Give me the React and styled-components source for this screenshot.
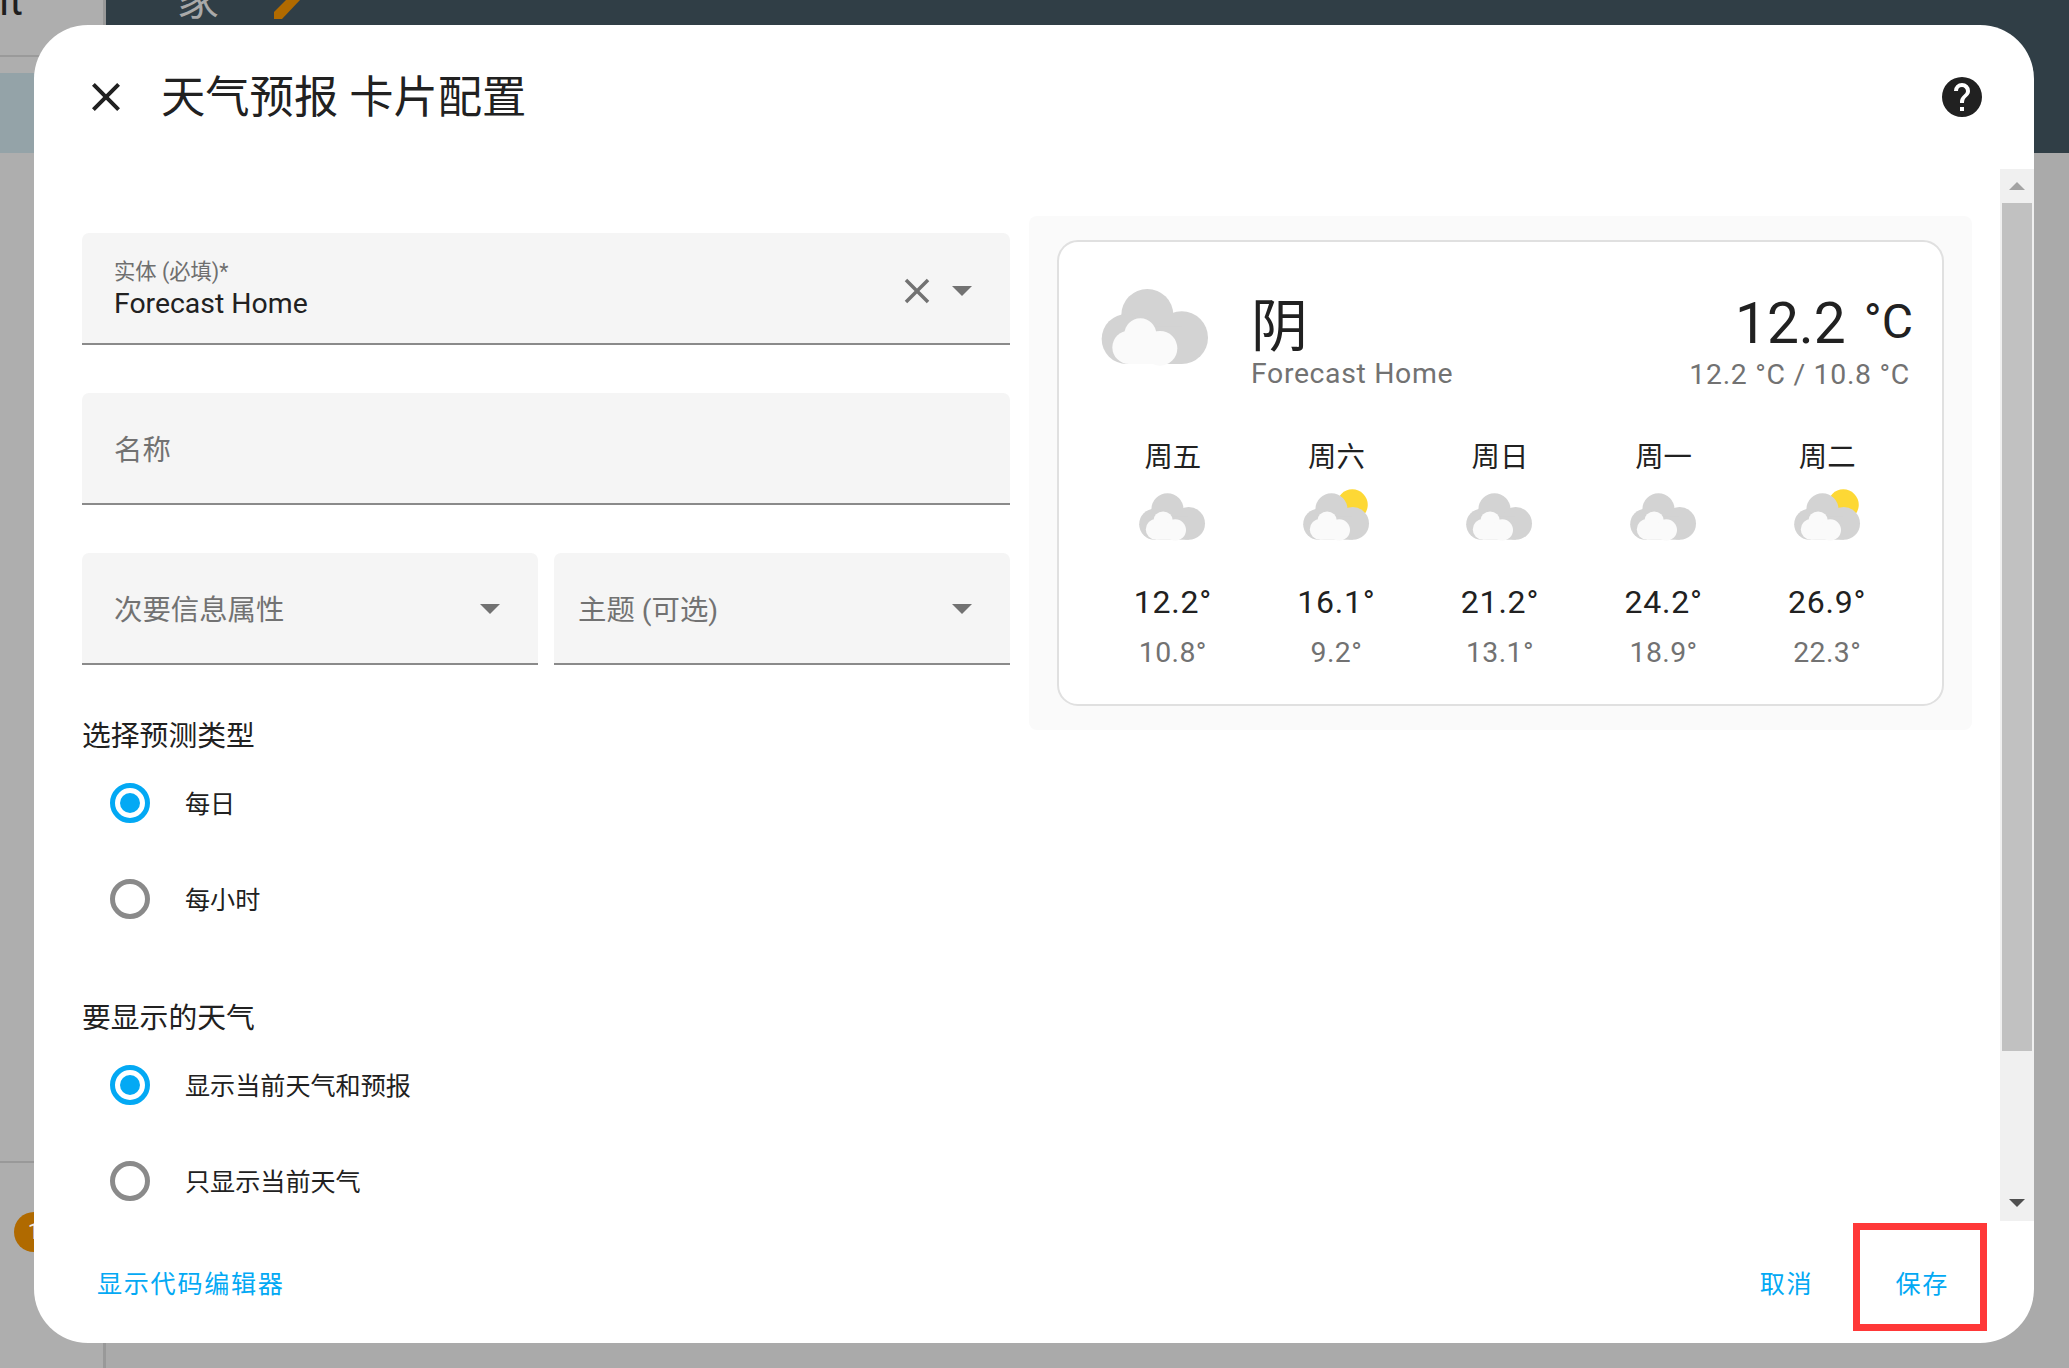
import React from "react";
import styled, { createGlobalStyle } from "styled-components";

const Global = createGlobalStyle`
  html, body { margin: 0; padding: 0; width: 2069px; height: 1368px; overflow: hidden; background: #aaaaaa; }
  * { box-sizing: border-box; }
  body { font-family: Roboto, "Noto Sans CJK SC", "Noto Sans", sans-serif; color: #212121; }
`;

const Page = styled.div`
  position: relative;
  width: 2069px;
  height: 1368px;
  display: flex;
  overflow: hidden;
  background: #aaaaaa;
`;
const Sidebar = styled.aside`
  width: 106px;
  flex: none;
  display: flex;
  flex-direction: column;
  border-right: 3px solid #999999;
  background: #aeaeae;
`;
const SideTitle = styled.div`
  height: 57px;
  flex: none;
  border-bottom: 2px solid #9a9a9a;
  overflow: hidden;
  font-size: 42px;
  line-height: 42px;
  color: #1f1f1f;
  white-space: nowrap;
  & > span { display: block; margin-top: -20px; margin-left: -1px; }
`;
const SideActive = styled.div`
  height: 80px;
  margin-top: 16px;
  flex: none;
  background: #94a3a8;
`;
const SideSpacer = styled.div`
  height: 1010px;
  flex: none;
  border-bottom: 2px solid #999999;
`;
const Badge = styled.div`
  width: 40px;
  height: 40px;
  margin: 49px 0 0 14px;
  border-radius: 50%;
  background: #b06a00;
  color: #eeeeee;
  font-size: 22px;
  line-height: 40px;
  text-align: center;
`;
const Main = styled.main`
  flex: 1;
  display: flex;
  flex-direction: column;
`;
const TopBar = styled.header`
  height: 153px;
  flex: none;
  background: #303e46;
  display: flex;
  align-items: flex-start;
  padding-left: 71px;
  gap: 55px;
  overflow: hidden;
`;
const TopWord = styled.span`
  font-size: 42px;
  line-height: 42px;
  margin-top: -20px;
  color: #a9a9a9;
`;
const Dialog = styled.section`
  position: absolute;
  left: 34px;
  top: 25px;
  width: 2000px;
  height: 1318px;
  border-radius: 54px;
  background: #ffffff;
  display: flex;
  flex-direction: column;
  overflow: hidden;
`;
const DialogHeader = styled.div`
  height: 144px;
  flex: none;
  display: flex;
  align-items: flex-start;
  padding: 48px 48px 0 48px;
`;
const HeaderIcon = styled.svg`
  width: 48px;
  height: 48px;
  flex: none;
  fill: #212121;
`;
const Title = styled.h1`
  flex: 1;
  margin: 1px 0 0 31px;
  font-size: 44.3px;
  line-height: 48px;
  font-weight: 400;
  color: #212121;
`;
const Body = styled.div`
  height: 1052px;
  flex: none;
  display: flex;
  overflow: hidden;
`;
const Content = styled.div`
  flex: 1;
  display: flex;
  align-items: flex-start;
  padding: 47px 28px 0 48px;
  gap: 19px;
`;
const FormColumn = styled.div`
  width: 928px;
  flex: none;
  padding-top: 17px;
  display: flex;
  flex-direction: column;
`;
const Field = styled.div`
  position: relative;
  height: 112px;
  flex: none;
  min-width: 0;
  margin-bottom: ${p => (p.$half ? "0" : "48px")};
  padding-left: ${p => p.$inset || 32}px;
  padding-right: 24px;
  background: #f5f5f5;
  border-bottom: 2px solid #8a8a8a;
  border-radius: 7px 7px 0 0;
  display: flex;
  align-items: center;
`;
const FieldStack = styled.div`
  flex: 1;
  padding-top: 3px;
  display: flex;
  flex-direction: column;
`;
const SmallLabel = styled.span`
  font-size: 21.3px;
  line-height: 28px;
  color: #6f6f6f;
`;
const FieldValue = styled.span`
  font-size: 28.4px;
  line-height: 36px;
  color: #212121;
`;
const Placeholder = styled.span`
  flex: 1;
  padding-top: 6px;
  font-size: 28.4px;
  line-height: 40px;
  color: #727272;
`;
const FieldIcon = styled.svg`
  width: ${p => p.$size}px;
  height: ${p => p.$size}px;
  flex: none;
  fill: #727272;
  margin-top: ${p => p.$drop || 0}px;
`;
const FieldRow = styled.div`
  display: grid;
  grid-template-columns: 1fr 1fr;
  gap: 16px;
`;
const Group = styled.div`
  margin-top: 48px;
`;
const GroupTitle = styled.div`
  height: 42px;
  padding-top: 2px;
  font-size: 28.8px;
  line-height: 42px;
  color: #212121;
`;
const RadioRow = styled.label`
  height: 96px;
  padding-left: 28px;
  display: flex;
  align-items: center;
  gap: 35px;
  font-size: 25.1px;
  line-height: 34px;
  color: #212121;
`;
const RadioText = styled.span`
  margin-top: 3px;
`;
const RadioMark = styled.span`
  width: 40px;
  height: 40px;
  flex: none;
  border-radius: 50%;
  border: 5px solid ${p => (p.$on ? "#03a9f4" : "#8a8a8a")};
  display: flex;
  align-items: center;
  justify-content: center;
  &::after {
    content: "";
    width: 20px;
    height: 20px;
    border-radius: 50%;
    background: ${p => (p.$on ? "#03a9f4" : "transparent")};
  }
`;
const PreviewPanel = styled.div`
  width: 943px;
  flex: none;
  padding: 24px 28px 24px 28px;
  border-radius: 8px;
  background: #fafafa;
`;
const WeatherCard = styled.div`
  height: 466px;
  padding: 47px 29px 0 44px;
  background: #ffffff;
  border: 2.7px solid #e0e0e0;
  border-radius: 21px;
`;
const TopRow = styled.div`
  height: 149px;
  display: flex;
  align-items: flex-start;
`;
const BigIconWrap = styled.div`
  width: 148px;
  flex: none;
`;
const Cloud = styled.svg`
  display: block;
  overflow: visible;
  width: ${p => p.$w}px;
  height: ${p => p.$h}px;
`;
const NameBlock = styled.div`
  flex: 1;
`;
const Condition = styled.div`
  font-size: 56.9px;
  line-height: 64px;
  margin-top: 6px;
  color: #212121;
`;
const EntityName = styled.div`
  font-size: 28.4px;
  line-height: 30px;
  letter-spacing: 0.65px;
  color: #727272;
`;
const TempBlock = styled.div`
  display: flex;
  flex-direction: column;
  align-items: flex-end;
`;
const BigTemp = styled.div`
  font-size: 56.9px;
  line-height: 64px;
  margin-top: 3px;
  color: #212121;
  display: flex;
  align-items: flex-start;
  gap: 18px;
`;
const TempUnit = styled.span`
  font-size: 48px;
  line-height: 60px;
`;
const TempRange = styled.div`
  font-size: 28.4px;
  line-height: 36px;
  margin-top: 1px;
  margin-right: 3px;
  letter-spacing: 0.7px;
  color: #727272;
`;
const Forecast = styled.div`
  display: grid;
  grid-template-columns: repeat(5, 163.6px);
  margin-left: -12px;
`;
const DayCol = styled.div`
  display: flex;
  flex-direction: column;
  align-items: center;
`;
const DayName = styled.div`
  font-size: 28.4px;
  line-height: 40px;
  color: #212121;
`;
const DayIcon = styled.div`
  margin-top: 15px;
  height: 47px;
`;
const High = styled.div`
  margin-top: 42px;
  font-size: 32px;
  line-height: 40px;
  letter-spacing: 0.8px;
  color: #212121;
`;
const Low = styled.div`
  margin-top: 12px;
  font-size: 28.4px;
  line-height: 38px;
  letter-spacing: 0.4px;
  color: #727272;
`;
const Scrollbar = styled.div`
  width: 34px;
  height: 1052px;
  flex: none;
  background: #f0f0f0;
  display: flex;
  flex-direction: column;
  align-items: center;
`;
const ScrollArrow = styled.div`
  height: ${p => p.$h}px;
  width: 100%;
  flex: none;
  display: flex;
  align-items: center;
  justify-content: center;
`;
const ScrollArrowGlyph = styled.svg`
  width: 16px;
  height: 8px;
  fill: ${p => p.$fill};
`;
const ScrollThumb = styled.div`
  width: 30px;
  height: 848px;
  flex: none;
  background: #c1c1c1;
`;
const ScrollTrack = styled.div`
  flex: 1;
`;
const Footer = styled.footer`
  position: relative;
  flex: 1;
  display: flex;
  align-items: center;
  padding: 6px 85px 0 63px;
`;
const TextButton = styled.button`
  border: 0;
  padding: 0;
  background: none;
  font-family: inherit;
  font-size: 25.1px;
  line-height: 36px;
  letter-spacing: 1.7px;
  color: #03a9f4;
  margin-right: ${p => (p.$spread ? "auto" : p.$gap ? p.$gap + "px" : "0")};
`;
const Highlight = styled.div`
  position: absolute;
  right: 47px;
  top: 2px;
  width: 134px;
  height: 108px;
  border: 7px solid #ff3838;
`;

const closePath = "M19,6.41L17.59,5L12,10.59L6.41,5L5,6.41L10.59,12L5,17.59L6.41,19L12,13.41L17.59,19L19,17.59L13.41,12L19,6.41Z";
const helpPath = "M15.07,11.25L14.17,12.17C13.45,12.89 13,13.5 13,15H11V14.5C11,13.39 11.45,12.39 12.17,11.67L13.41,10.41C13.78,10.05 14,9.55 14,9C14,7.89 13.1,7 12,7A2,2 0 0,0 10,9H8A4,4 0 0,1 12,5A4,4 0 0,1 16,9C16,9.88 15.64,10.67 15.07,11.25M13,19H11V17H13M12,2A10,10 0 0,0 2,12A10,10 0 0,0 12,22A10,10 0 0,0 22,12A10,10 0 0,0 12,2Z";
const menuDown = "M7,10L12,15L17,10H7Z";

function WeatherIcon({ w, h, sun }) {
  return (
    <Cloud $w={w} $h={h} viewBox="35 57 315 225">
      {sun && <circle cx="269" cy="113" r="75" fill="#fdd835" />}
      <g fill="#d3d3d3">
        <circle cx="168" cy="135" r="78" />
        <circle cx="106" cy="207" r="75" />
        <circle cx="271" cy="203" r="79" />
        <rect x="106" y="170" width="165" height="112" />
      </g>
      <g fill="#fafafa">
        <circle cx="147" cy="193" r="48" />
        <circle cx="113" cy="232" r="50" />
        <circle cx="206" cy="235" r="52" />
        <rect x="113" y="210" width="93" height="72" />
      </g>
    </Cloud>
  );
}

const days = [
  { name: "周五", hi: "12.2°", lo: "10.8°" },
  { name: "周六", hi: "16.1°", lo: "9.2°", sun: true },
  { name: "周日", hi: "21.2°", lo: "13.1°" },
  { name: "周一", hi: "24.2°", lo: "18.9°" },
  { name: "周二", hi: "26.9°", lo: "22.3°", sun: true },
];

export default function App() {
  return (
    <Page>
      <Global />
      <Sidebar>
        <SideTitle><span>it</span></SideTitle>
        <SideActive />
        <SideSpacer />
        <Badge>1</Badge>
      </Sidebar>
      <Main>
        <TopBar>
          <TopWord>家</TopWord>
          <svg width="26" height="19" viewBox="0 0 26 19">
            <path d="M12 0L0 12V19H8L26 0Z" fill="#b06a00" />
          </svg>
        </TopBar>
      </Main>
      <Dialog>
        <DialogHeader>
          <HeaderIcon viewBox="0 0 24 24"><path d={closePath} /></HeaderIcon>
          <Title>天气预报 卡片配置</Title>
          <HeaderIcon viewBox="0 0 24 24"><path d={helpPath} /></HeaderIcon>
        </DialogHeader>
        <Body>
          <Content>
            <FormColumn>
              <Field>
                <FieldStack>
                  <SmallLabel>实体 (必填)*</SmallLabel>
                  <FieldValue>Forecast Home</FieldValue>
                </FieldStack>
                <FieldIcon $size={42} $drop={5} viewBox="0 0 24 24"><path d={closePath} /></FieldIcon>
                <FieldIcon $size={48} $drop={4} viewBox="0 0 24 24"><path d={menuDown} /></FieldIcon>
              </Field>
              <Field>
                <Placeholder>名称</Placeholder>
              </Field>
              <FieldRow>
                <Field $half>
                  <Placeholder>次要信息属性</Placeholder>
                  <FieldIcon $size={48} viewBox="0 0 24 24"><path d={menuDown} /></FieldIcon>
                </Field>
                <Field $half $inset={24}>
                  <Placeholder>主题 (可选)</Placeholder>
                  <FieldIcon $size={48} viewBox="0 0 24 24"><path d={menuDown} /></FieldIcon>
                </Field>
              </FieldRow>
              <Group>
                <GroupTitle>选择预测类型</GroupTitle>
                <RadioRow><RadioMark $on /><RadioText>每日</RadioText></RadioRow>
                <RadioRow><RadioMark /><RadioText>每小时</RadioText></RadioRow>
              </Group>
              <Group>
                <GroupTitle>要显示的天气</GroupTitle>
                <RadioRow><RadioMark $on /><RadioText>显示当前天气和预报</RadioText></RadioRow>
                <RadioRow><RadioMark /><RadioText>只显示当前天气</RadioText></RadioRow>
              </Group>
            </FormColumn>
            <PreviewPanel>
              <WeatherCard>
                <TopRow>
                  <BigIconWrap><WeatherIcon w={105} h={75} /></BigIconWrap>
                  <NameBlock>
                    <Condition>阴</Condition>
                    <EntityName>Forecast Home</EntityName>
                  </NameBlock>
                  <TempBlock>
                    <BigTemp>12.2<TempUnit>°C</TempUnit></BigTemp>
                    <TempRange>12.2 °C / 10.8 °C</TempRange>
                  </TempBlock>
                </TopRow>
                <Forecast>
                  {days.map(d => (
                    <DayCol key={d.name}>
                      <DayName>{d.name}</DayName>
                      <DayIcon><WeatherIcon w={65} h={47} sun={d.sun} /></DayIcon>
                      <High>{d.hi}</High>
                      <Low>{d.lo}</Low>
                    </DayCol>
                  ))}
                </Forecast>
              </WeatherCard>
            </PreviewPanel>
          </Content>
          <Scrollbar>
            <ScrollArrow $h={34}>
              <ScrollArrowGlyph $fill="#a3a3a3" viewBox="0 0 16 8"><path d="M8 0L16 8H0Z" /></ScrollArrowGlyph>
            </ScrollArrow>
            <ScrollThumb />
            <ScrollTrack />
            <ScrollArrow $h={36}>
              <ScrollArrowGlyph $fill="#505050" viewBox="0 0 16 8"><path d="M0 0H16L8 8Z" /></ScrollArrowGlyph>
            </ScrollArrow>
          </Scrollbar>
        </Body>
        <Footer>
          <TextButton $spread>显示代码编辑器</TextButton>
          <TextButton $gap={82}>取消</TextButton>
          <TextButton>保存</TextButton>
          <Highlight />
        </Footer>
      </Dialog>
    </Page>
  );
}
